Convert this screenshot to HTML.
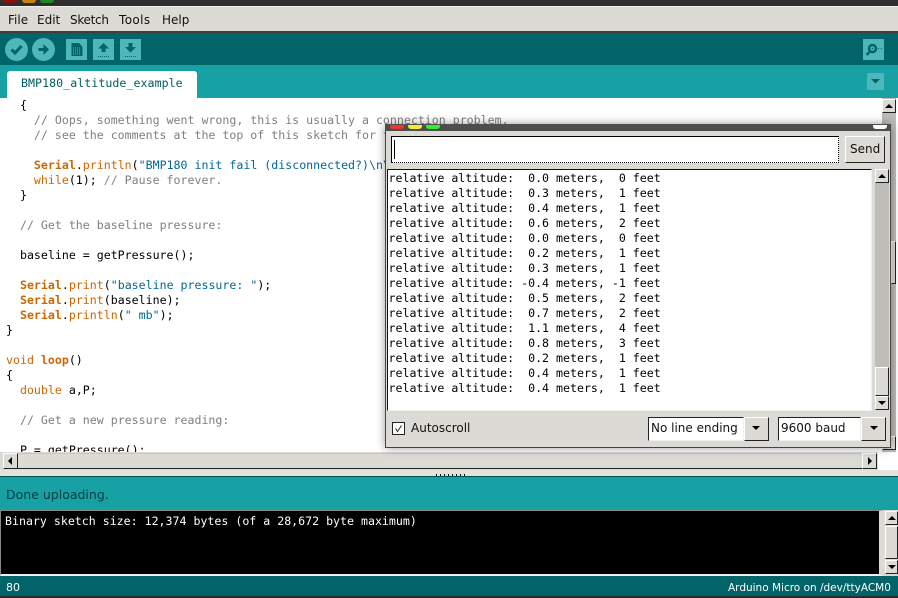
<!DOCTYPE html>
<html><head><meta charset="utf-8">
<style>
html,body{margin:0;padding:0;background:#2b2b2b}
#r{position:relative;width:898px;height:598px;overflow:hidden;background:#dcdad5;font-family:"DejaVu Sans",sans-serif}
#r div{position:absolute;box-sizing:border-box}
.t{white-space:pre;line-height:15px}
.m{font-family:"DejaVu Sans Mono",monospace;font-size:11.6px;white-space:pre;line-height:15px;margin:0}
.c{color:#7f7f7f}.k{color:#cc6600}.b{color:#cc6600;font-weight:bold}.s{color:#006699}
.btn{background:#dcdad5;border:1px solid;border-color:#fff #222 #222 #fff}
.tri-u{width:0;height:0;border-left:4px solid transparent;border-right:4px solid transparent;border-bottom:4px solid #000}
.tri-d{width:0;height:0;border-left:4px solid transparent;border-right:4px solid transparent;border-top:4px solid #000}
.tri-l{width:0;height:0;border-top:4px solid transparent;border-bottom:4px solid transparent;border-right:4px solid #000}
.tri-r{width:0;height:0;border-top:4px solid transparent;border-bottom:4px solid transparent;border-left:4px solid #000}
</style></head><body>
<div id="r">
<!-- title strip -->
<div style="left:0;top:0;width:898px;height:6px;background:#2e2e2e"></div>
<div style="left:3px;top:0;width:14px;height:3px;background:#8a1010;border-radius:0 0 3px 3px"></div>
<div style="left:22px;top:0;width:14px;height:3px;background:#c8830f;border-radius:0 0 3px 3px"></div>
<div style="left:40px;top:0;width:14px;height:3px;background:#1e8a1e;border-radius:0 0 3px 3px"></div>
<div style="left:0;top:6px;width:898px;height:1px;background:#f2f1ee"></div>
<!-- menu -->
<div class="t" style="left:8px;top:12px;font-size:12px;color:#111;line-height:17px">File</div>
<div class="t" style="left:37px;top:12px;font-size:12px;color:#111;line-height:17px">Edit</div>
<div class="t" style="left:70px;top:12px;font-size:12px;color:#111;line-height:17px;letter-spacing:-.3px">Sketch</div>
<div class="t" style="left:119px;top:12px;font-size:12px;color:#111;line-height:17px;letter-spacing:.4px">Tools</div>
<div class="t" style="left:162px;top:12px;font-size:12px;color:#111;line-height:17px">Help</div>
<div style="left:0;top:31px;width:898px;height:2px;background:#3f3f3d"></div>
<!-- toolbar -->
<div style="left:0;top:33px;width:898px;height:32px;background:#006468"></div>
<div style="left:0;top:65px;width:898px;height:33px;background:#17a1a5"></div>
<svg style="position:absolute;left:0;top:33px" width="898" height="65" viewBox="0 33 898 65">
<circle cx="16.5" cy="49.5" r="11.5" fill="#4db7bb"/>
<path d="M11.500 49.500l3.500 3.500 6.500-7" fill="none" stroke="#006468" stroke-width="3"/>
<circle cx="43.5" cy="49.5" r="11.5" fill="#4db7bb"/>
<path d="M38.500 48h5v-4l5.500 5.500-5.500 5.500v-4h-5z" fill="#006468"/>
<rect x="66" y="39" width="21" height="21" fill="#4db7bb"/>
<path d="M71.500 43h7.500l3.500 4v9h-11z" fill="#006468"/>
<path d="M73 48h1M75 48h1M77 48h1M79 48h1M73 50h1M75 50h1M77 50h1M79 50h1M73 52h1M75 52h1M77 52h1M79 52h1M73 54h1M75 54h1M77 54h1M79 54h1" stroke="#4db7bb"/>
<rect x="93" y="39" width="21" height="21" fill="#4db7bb"/>
<path d="M103.500 43l5.500 5.500h-3.500v3.500h-4v-3.500h-3.500z" fill="#006468"/>
<path d="M98 56.500h11" stroke="#006468" stroke-dasharray="1 1"/>
<rect x="120" y="39" width="21" height="21" fill="#4db7bb"/>
<path d="M128.500 43h4v4h3.500l-5.500 5.500-5.500-5.500h3.500z" fill="#006468"/>
<path d="M125 56.500h11" stroke="#006468" stroke-dasharray="1 1"/>
<rect x="863" y="39" width="21" height="21" fill="#4db7bb"/>
<circle cx="872.500" cy="48.500" r="3.500" fill="none" stroke="#006468" stroke-width="2.500"/>
<circle cx="872.500" cy="48.500" r=".8" fill="#006468"/>
<path d="M869.500 52l-3 3" stroke="#006468" stroke-width="2.500"/>
<path d="M878 48.500h1M881 48.500h1" stroke="#006468"/>
<rect x="867" y="73" width="17" height="17" fill="#4db7bb"/>
<path d="M871 79h9l-4.500 4.500z" fill="#006468"/>
</svg>
<!-- tab -->
<div style="left:7px;top:71px;width:190px;height:27px;background:#fff;border-radius:3px 3px 0 0"></div>
<div class="m" style="left:21px;top:75px;color:#005c5f;font-size:11.6px;line-height:17px;letter-spacing:.05px">BMP180_altitude_example</div>
<!-- editor -->
<div style="left:0;top:98px;width:882px;height:354px;background:#fff;overflow:hidden">
<pre class="m" style="position:absolute;left:6px;top:0;color:#000">  {
    <span class="c">// Oops, something went wrong, this is usually a connection problem.</span>
    <span class="c">// see the comments at the top of this sketch for the proper connections.</span>

    <span class="b">Serial</span>.<span class="k">println</span>(<span class="s">"BMP180 init fail (disconnected?)\n\n"</span>);
    <span class="k">while</span>(1); <span class="c">// Pause forever.</span>
  }

  <span class="c">// Get the baseline pressure:</span>

  baseline = getPressure();

  <span class="b">Serial</span>.<span class="k">print</span>(<span class="s">"baseline pressure: "</span>);
  <span class="b">Serial</span>.<span class="k">print</span>(baseline);
  <span class="b">Serial</span>.<span class="k">println</span>(<span class="s">" mb"</span>);
}

<span class="k">void</span> <span style="color:#cc6600;font-weight:bold">loop</span>()
{
  <span class="k">double</span> a,P;

  <span class="c">// Get a new pressure reading:</span>

  P = getPressure();</pre>
</div>
<!-- editor vscroll -->
<div style="left:882px;top:98px;width:16px;height:354px;background:#fff"></div>
<div style="left:882px;top:98px;width:14px;height:354px;background:#bebcb6"></div>
<div class="btn" style="left:882px;top:99px;width:14px;height:14px"><div class="tri-u" style="left:2px;top:4px"></div></div>
<div class="btn" style="left:891px;top:241px;width:5px;height:43px"></div>
<div class="btn" style="left:882px;top:436px;width:14px;height:14px"></div>
<!-- hscroll -->
<div style="left:0;top:452px;width:878px;height:18px;background:#dcdad5"></div>
<div style="left:3px;top:453px;width:874px;height:16px;border:1px solid #333;border-color:#c8c6c0 #fff #222 #444;background:#dcdad5"></div>
<div class="btn" style="left:3px;top:453px;width:15px;height:16px"><div class="tri-l" style="left:4px;top:3px"></div></div>
<div class="btn" style="left:862px;top:453px;width:15px;height:16px"><div class="tri-r" style="left:5px;top:3px"></div></div>
<div style="left:878px;top:452px;width:20px;height:18px;background:#fff"></div>
<!-- divider -->
<div style="left:0;top:470px;width:898px;height:6px;background:#e4e2dd"></div>
<div style="left:436px;top:474px;width:32px;height:2px;background:repeating-linear-gradient(90deg,#111 0,#111 1px,transparent 1px,transparent 4px)"></div>
<div style="left:0;top:476px;width:898px;height:1px;background:#004f52"></div>
<!-- status -->
<div style="left:0;top:477px;width:898px;height:33px;background:#17a1a5"></div>
<div class="t" style="left:6px;top:486px;font-size:12.5px;color:#003e40;line-height:17px">Done uploading.</div>
<!-- console -->
<div style="left:0;top:510px;width:884px;height:66px;background:#000;border:1px solid #8a8880;border-bottom:2px solid #f0efec;border-right:5px solid #dcdad5"></div>
<pre class="m" style="position:absolute;left:5px;top:514px;color:#fff">Binary sketch size: 12,374 bytes (of a 28,672 byte maximum)</pre>
<div style="left:884px;top:510px;width:14px;height:66px;background:#dcdad5"></div>
<div class="btn" style="left:885px;top:511px;width:13px;height:14px"><div class="tri-u" style="left:2px;top:4px"></div></div>
<div class="btn" style="left:885px;top:526px;width:13px;height:33px"></div>
<div class="btn" style="left:885px;top:560px;width:13px;height:14px"><div class="tri-d" style="left:2px;top:4px"></div></div>
<!-- bottom -->
<div style="left:0;top:576px;width:898px;height:20px;background:#006468"></div>
<div class="t" style="left:6px;top:580px;font-size:11px;color:#fff">80</div>
<div class="t" style="left:728px;top:581px;font-size:10.500px;color:#fff">Arduino Micro on /dev/ttyACM0</div>
<div style="left:0;top:596px;width:898px;height:2px;background:#2b2b2b"></div>

<!-- serial monitor -->
<div style="left:385px;top:124px;width:506px;height:324px;background:#dcdad5;border:1px solid #444;border-top:none;box-shadow:0 0 9px rgba(0,0,0,.4)"></div>
<div style="left:385px;top:124px;width:506px;height:7px;background:#4e4e4c"></div>
<div style="left:390px;top:125px;width:14px;height:4px;background:#ee3333;border-radius:0 0 3px 3px"></div>
<div style="left:408px;top:125px;width:14px;height:4px;background:#eeee33;border-radius:0 0 3px 3px"></div>
<div style="left:426px;top:125px;width:14px;height:4px;background:#33ee33;border-radius:0 0 3px 3px"></div>
<div style="left:873px;top:125px;width:14px;height:4px;background:#fff;border-radius:0 0 3px 3px"></div>
<div style="left:391px;top:136px;width:448px;height:27px;background:#fff;border:1px dotted #000;border-top:1px solid #000;border-left:1px solid #000"></div>
<div style="left:394px;top:140px;width:1px;height:19px;background:#000"></div>
<div class="btn" style="left:845px;top:136px;width:40px;height:27px"></div>
<div class="t" style="left:850px;top:142px;font-size:12px;color:#111">Send</div>
<div style="left:387px;top:169px;width:485px;height:242px;background:#fff;border:1px solid;border-color:#111 #f0efec #f0efec #111"></div>
<pre class="m" style="position:absolute;left:388.500px;top:170.500px;color:#000">relative altitude:  0.0 meters,  0 feet
relative altitude:  0.3 meters,  1 feet
relative altitude:  0.4 meters,  1 feet
relative altitude:  0.6 meters,  2 feet
relative altitude:  0.0 meters,  0 feet
relative altitude:  0.2 meters,  1 feet
relative altitude:  0.3 meters,  1 feet
relative altitude: -0.4 meters, -1 feet
relative altitude:  0.5 meters,  2 feet
relative altitude:  0.7 meters,  2 feet
relative altitude:  1.1 meters,  4 feet
relative altitude:  0.8 meters,  3 feet
relative altitude:  0.2 meters,  1 feet
relative altitude:  0.4 meters,  1 feet
relative altitude:  0.4 meters,  1 feet</pre>
<div style="left:875px;top:169px;width:14px;height:241px;background:#bebcb6"></div>
<div class="btn" style="left:875px;top:169px;width:14px;height:14px"><div class="tri-u" style="left:2px;top:4px"></div></div>
<div class="btn" style="left:875px;top:367px;width:14px;height:29px"></div>
<div class="btn" style="left:875px;top:396px;width:14px;height:14px"><div class="tri-d" style="left:2px;top:4px"></div></div>
<!-- monitor footer -->
<div style="left:392px;top:422px;width:13px;height:13px;background:#fff;border:1px solid #222"></div>
<svg style="position:absolute;left:392px;top:422px" width="13" height="13"><path d="M3.500 6.500l2 3 4-6" fill="none" stroke="#222"/></svg>
<div class="t" style="left:411px;top:421px;font-size:12px;color:#111">Autoscroll</div>
<div style="left:648px;top:417px;width:96px;height:24px;background:#fff;border:1px solid;border-color:#222 #f0efec #f0efec #222"></div>
<div class="t" style="left:651px;top:421px;font-size:12px;color:#111">No line ending</div>
<div class="btn" style="left:744px;top:417px;width:25px;height:24px"><div class="tri-d" style="left:7px;top:8px"></div></div>
<div style="left:778px;top:417px;width:83px;height:24px;background:#fff;border:1px solid;border-color:#222 #f0efec #f0efec #222"></div>
<div class="t" style="left:781px;top:421px;font-size:12px;color:#111">9600 baud</div>
<div class="btn" style="left:861px;top:417px;width:25px;height:24px"><div class="tri-d" style="left:8px;top:8px"></div></div>
</div>
</body></html>
